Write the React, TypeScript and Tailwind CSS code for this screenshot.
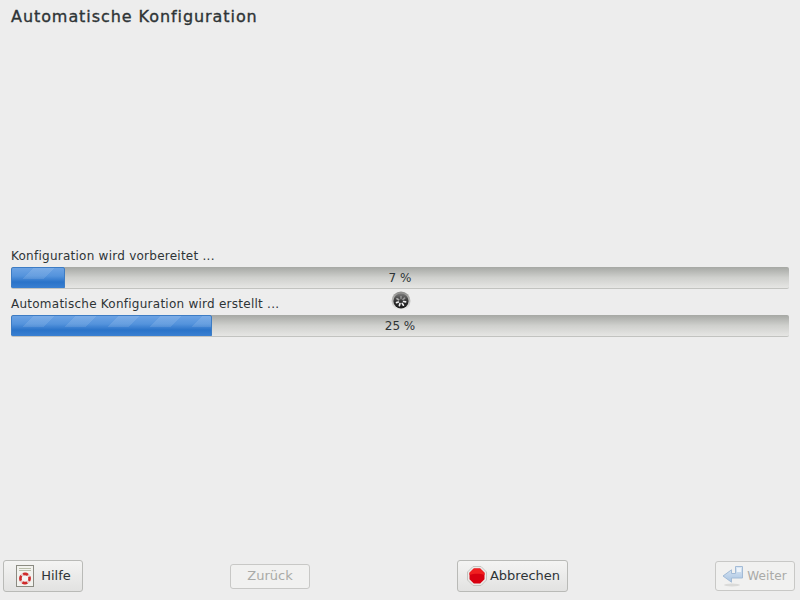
import React from 'react';

function ProgressRow({ label, percent, fill, spinner }: { label: string; percent: number; fill: number; spinner?: boolean }) {
  return (
    <div className="flex flex-col">
      <div className="relative h-[26px] flex items-center text-[12px] tracking-[0.25px] text-[#2e3436] pt-[4px]">
        <span>{label}</span>
        {spinner && (
          <div className="absolute left-[380px] top-[2px]">
            <Spinner />
          </div>
        )}
      </div>
      <div className="relative h-[22px] rounded-[2px] bg-gradient-to-b from-[#a6a8a4] via-[#cfd0cd] to-[#e6e6e4] border-b border-[#c2c3c0] overflow-hidden">
        <div
          className="h-[22px] rounded-[2px] border border-[#3d7cc4] bg-[linear-gradient(180deg,#6ca3e4_0%,#5493dc_40%,#2a73c9_70%,#3a80d2_100%)] relative overflow-hidden"
          style={{ width: fill }}
        >
          <div className="absolute inset-x-0 top-0 h-[11px] bg-[repeating-linear-gradient(135deg,transparent_0px,transparent_15px,rgba(255,255,255,0.11)_15px,rgba(255,255,255,0.11)_30px)]" />
        </div>
        <div className="absolute inset-0 flex items-center justify-center text-[12px] text-[#2e3436]">
          {percent} %
        </div>
      </div>
    </div>
  );
}

function Spinner() {
  return (
    <svg width="20" height="20" viewBox="0 0 20 20">
      <defs>
        <linearGradient id="spinnerRim" x1="0" y1="0" x2="0" y2="1">
          <stop offset="0" stopColor="#8a8a88" />
          <stop offset="1" stopColor="#f2f2f0" />
        </linearGradient>
        <linearGradient id="spinnerFace" x1="0" y1="0" x2="0" y2="1">
          <stop offset="0" stopColor="#7c7c7c" />
          <stop offset="0.55" stopColor="#2c2c2c" />
          <stop offset="1" stopColor="#1c1c1c" />
        </linearGradient>
      </defs>
      <circle cx="10" cy="10" r="9.5" fill="url(#spinnerRim)" />
      <circle cx="10" cy="10" r="7.6" fill="url(#spinnerFace)" />
      <g stroke="#f0f0f0" strokeWidth="1.7" strokeLinecap="round">
        <line x1="10" y1="7.6" x2="10" y2="5.6" opacity="0.35" />
        <line x1="12" y1="8.5" x2="13.6" y2="7.2" opacity="0.45" />
        <line x1="12.6" y1="10.5" x2="14.6" y2="10.8" />
        <line x1="11.2" y1="12.4" x2="12.4" y2="14.2" />
        <line x1="9" y1="12.6" x2="8.4" y2="14.6" />
        <line x1="7.4" y1="11" x2="5.5" y2="11.6" />
        <line x1="7.6" y1="8.8" x2="6" y2="7.8" opacity="0.6" />
      </g>
    </svg>
  );
}

function HelpIcon() {
  return (
    <svg width="18" height="22" viewBox="0 0 18 22">
      <rect x="0.5" y="0.5" width="17" height="21" fill="#f2f2ee" stroke="#8b8b82" />
      <path d="M3 3.5h12M3 5.5h12" stroke="#b9bdaa" strokeWidth="1" />
      <circle cx="9" cy="13.5" r="4.6" fill="#f4f4f4" stroke="#e6c8c8" strokeWidth="2.6" />
      <circle cx="9" cy="13.5" r="4.6" fill="none" stroke="#cf2a2a" strokeWidth="2.6" strokeDasharray="5 2.22" strokeDashoffset="2.5" />
    </svg>
  );
}

function StopIcon() {
  return (
    <svg width="20" height="20" viewBox="0 0 20 20">
      <polygon points="6,0.5 14,0.5 19.5,6 19.5,14 14,19.5 6,19.5 0.5,14 0.5,6" fill="#ececea" stroke="#c4c4c0" />
      <polygon points="6.8,2.5 13.2,2.5 17.5,6.8 17.5,13.2 13.2,17.5 6.8,17.5 2.5,13.2 2.5,6.8" fill="#d80010" />
      <path d="M6.8 2.5h6.4l4.3 4.3v2.2c-4 -1.8 -11 -1.8 -15 0V6.8z" fill="#f02020" />
    </svg>
  );
}

function ForwardIcon() {
  return (
    <svg width="22" height="22" viewBox="0 0 22 22">
      <defs>
        <linearGradient id="forwardFill" x1="0" y1="0" x2="0" y2="1">
          <stop offset="0" stopColor="#dce8f4" />
          <stop offset="1" stopColor="#a9c4e2" />
        </linearGradient>
      </defs>
      <ellipse cx="10" cy="20" rx="8" ry="1.4" fill="#dadad8" />
      <path d="M13.5 1.5h7v11.5h-11v4.2L1 11l8.5-6.2v3.7h4z" fill="url(#forwardFill)" stroke="#a3bbd6" strokeLinejoin="round" />
      <path d="M15 3h4v4h-4z" fill="#eef4fa" />
    </svg>
  );
}

function FooterButton({
  children,
  className,
  disabled,
}: {
  children: React.ReactNode;
  className: string;
  disabled?: boolean;
}) {
  return (
    <button
      className={
        'flex items-center justify-center gap-[3px] rounded-[3px] border text-[13px] ' +
        (disabled
          ? 'border-[#c8c8c6] bg-[#f1f1f0] text-[#a9aaa7] '
          : 'border-[#b9bab7] bg-gradient-to-b from-[#f4f4f3] to-[#e2e2e1] text-[#2e3436] ') +
        className
      }
    >
      {children}
    </button>
  );
}

export default function App() {
  return (
    <div className="w-[800px] h-[600px] bg-[#ededed] flex flex-col font-['DejaVu_Sans',sans-serif] overflow-hidden">
      <h1 className="px-[11px] pt-[7px] h-[241px] text-[16px] leading-[20px] font-normal tracking-[0.93px] text-[#2e3436] [-webkit-text-stroke:0.35px_#2e3436]">
        Automatische Konfiguration
      </h1>
      <div className="px-[11px] flex flex-col">
        <ProgressRow label="Konfiguration wird vorbereitet ..." percent={7} fill={54} />
        <ProgressRow label="Automatische Konfiguration wird erstellt ..." percent={25} fill={201} spinner />
      </div>
      <div className="flex-1" />
      <div className="flex items-center justify-between pl-[3px] pr-[5px] pb-[8px]">
        <FooterButton className="w-[80px] h-[32px]">
          <span className="ml-[1px] flex">
            <HelpIcon />
          </span>
          <span className="ml-[4px]">Hilfe</span>
        </FooterButton>
        <FooterButton className="w-[80px] h-[25px]" disabled>
          Zurück
        </FooterButton>
        <FooterButton className="w-[111px] h-[32px]">
          <span className="ml-[2px] flex">
            <StopIcon />
          </span>
          <span>Abbrechen</span>
        </FooterButton>
        <FooterButton className="w-[80px] h-[30px]" disabled>
          <ForwardIcon />
          <span className="text-[12px] tracking-[0.1px] mr-[1px]">Weiter</span>
        </FooterButton>
      </div>
    </div>
  );
}
